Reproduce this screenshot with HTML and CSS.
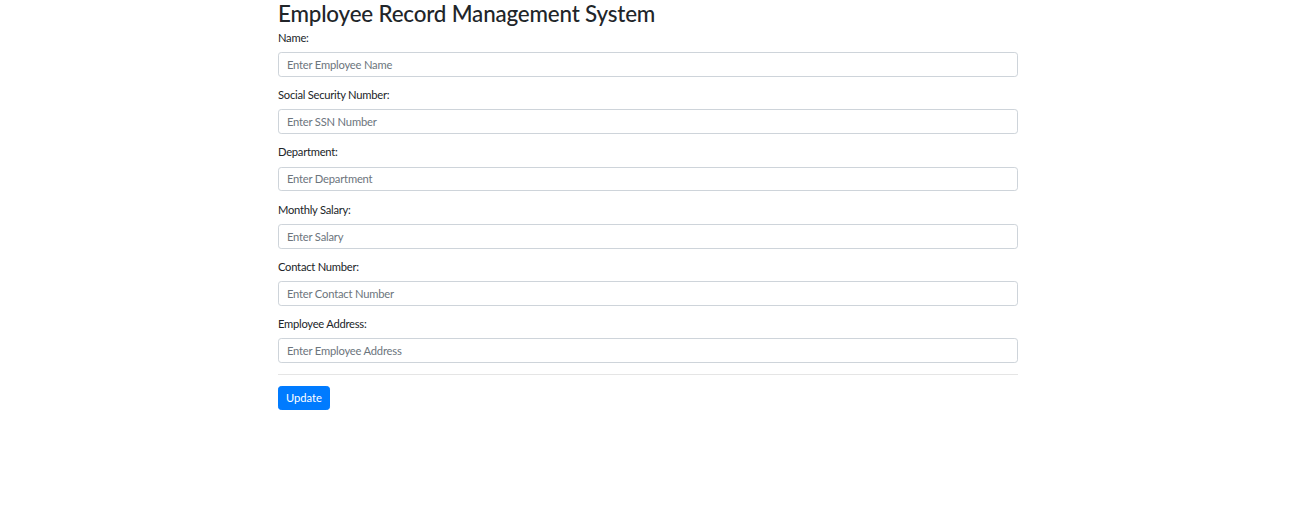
FILE: index.html
```html
<!DOCTYPE html>
<html lang="en">
<head>
<meta charset="utf-8">
<title>Employee Record Management System</title>
<link rel="stylesheet" href="styles.css">
</head>
<body>
<div class="container">
  <h3 class="title">Employee Record Management System</h3>
  <form class="form">
    <div class="group">
      <label class="label" for="name">Name:</label>
      <input class="input" id="name" type="text" placeholder="Enter Employee Name">
    </div>
    <div class="group">
      <label class="label" for="ssn">Social Security Number:</label>
      <input class="input" id="ssn" type="text" placeholder="Enter SSN Number">
    </div>
    <div class="group">
      <label class="label" for="dept">Department:</label>
      <input class="input" id="dept" type="text" placeholder="Enter Department">
    </div>
    <div class="group">
      <label class="label" for="salary">Monthly Salary:</label>
      <input class="input" id="salary" type="text" placeholder="Enter Salary">
    </div>
    <div class="group">
      <label class="label" for="contact">Contact Number:</label>
      <input class="input" id="contact" type="text" placeholder="Enter Contact Number">
    </div>
    <div class="group">
      <label class="label" for="address">Employee Address:</label>
      <input class="input" id="address" type="text" placeholder="Enter Employee Address">
    </div>
    <hr class="divider">
    <button class="btn" type="button">Update</button>
  </form>
</div>
</body>
</html>
```
FILE: styles.css
```css
* { box-sizing: border-box; }
html, body { margin: 0; padding: 0; background: #fff; }
body {
  font-family: Lato, "Open Sans", sans-serif;
  color: #212529;
}
.container {
  width: 740px;
  margin-left: calc(50% - 367px);
}
.title {
  margin: 0 0 3px 0;
  font-size: 22.4px;
  line-height: 27px;
  font-weight: 500;
  letter-spacing: -0.18px;
  color: #212529;
}
.form { display: flex; flex-direction: column; }
.group {
  display: flex;
  flex-direction: column;
  margin-bottom: 10.2px;
}
.label {
  font-size: 11.2px;
  line-height: 16.8px;
  margin-bottom: 5.4px;
  letter-spacing: -0.25px;
  color: #212529;
}
.input {
  height: 24.8px;
  width: 100%;
  padding: 0 8px;
  border: 1px solid #ced4da;
  border-radius: 3.2px;
  font-family: inherit;
  font-size: 11.2px;
  letter-spacing: -0.2px;
  color: #495057;
  background: #fff;
}
.input::placeholder { color: #6c757d; opacity: 1; }
.divider {
  width: 100%;
  margin: 1px 0 11px 0;
  border: 0;
  border-top: 1px solid rgba(0,0,0,0.1);
}
.btn {
  align-self: flex-start;
  height: 24px;
  width: 52px;
  padding: 0;
  border: 1px solid #007bff;
  border-radius: 3.2px;
  background: #007bff;
  color: #fff;
  font-family: inherit;
  font-size: 11.2px;
  line-height: 1;
}
```
